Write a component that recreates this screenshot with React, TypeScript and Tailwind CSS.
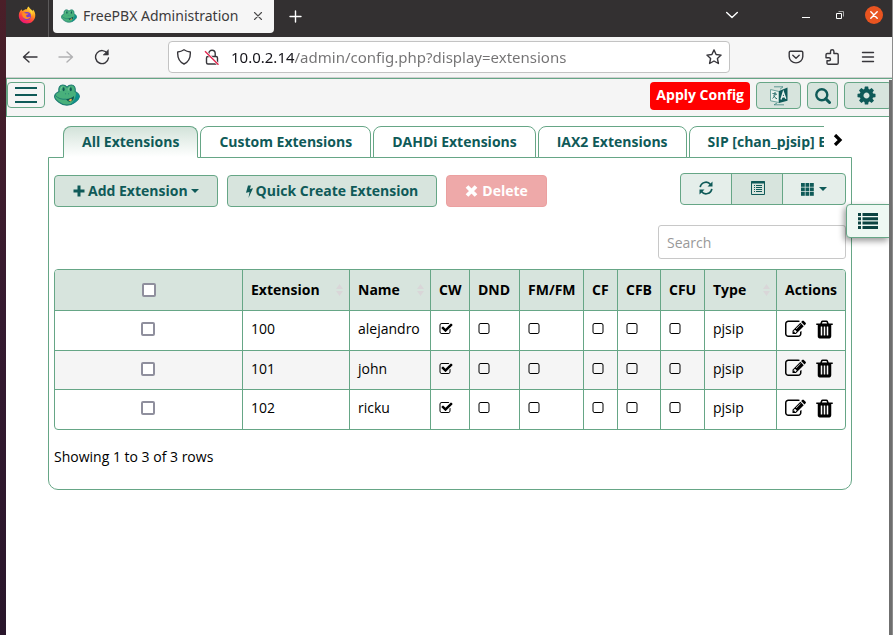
import type { ReactNode } from "react";

const CHECKED =
  "M1472 930v318q0 119-84.5 203.5t-203.5 84.5h-832q-119 0-203.5-84.5t-84.5-203.5v-832q0-119 84.5-203.5t203.5-84.5h832q63 0 117 25 15 7 18 23 3 17-9 29l-49 49q-10 10-23 10-3 0-9-2-23-6-45-6h-832q-66 0-113 47t-47 113v832q0 66 47 113t113 47h832q66 0 113-47t47-113v-254q0-13 9-22l64-64q10-10 23-10 6 0 12 3 20 8 20 29zm231-489l-814 814q-24 24-57 24t-57-24l-430-430q-24-24-24-57t24-57l110-110q24-24 57-24t57 24l263 263 647-647q24-24 57-24t57 24l110 110q24 24 24 57t-24 57z";
const UNCHECKED =
  "M1184 256h-832q-66 0-113 47t-47 113v832q0 66 47 113t113 47h832q66 0 113-47t47-113v-832q0-66-47-113t-113-47zm288 160v832q0 119-84.5 203.5t-203.5 84.5h-832q-119 0-203.5-84.5t-84.5-203.5v-832q0-119 84.5-203.5t203.5-84.5h832q119 0 203.5 84.5t84.5 203.5z";
const EDIT =
  "M888 1184l116-116-152-152-116 116v56h96v96h56zm440-720q-16-16-33 1l-350 350q-17 17-1 33t33-1l350-350q17-17 1-33zm80 594v190q0 119-84.5 203.5t-203.5 84.5h-832q-119 0-203.5-84.5t-84.5-203.5v-832q0-119 84.5-203.5t203.5-84.5h832q63 0 117 25 15 7 18 23 3 17-9 29l-49 49q-14 14-32 8-23-6-45-6h-832q-66 0-113 47t-47 113v832q0 66 47 113t113 47h832q66 0 113-47t47-113v-126q0-13 9-22l64-64q15-15 35-7t20 29zm-96-738l288 288-672 672h-288v-288zm444 132l-92 92-288-288 92-92q28-28 68-28t68 28l152 152q28 28 28 68t-28 68z";
const TRASH =
  "M704 1376v-704q0-14-9-23t-23-9h-64q-14 0-23 9t-9 23v704q0 14 9 23t23 9h64q14 0 23-9t9-23zm256 0v-704q0-14-9-23t-23-9h-64q-14 0-23 9t-9 23v704q0 14 9 23t23 9h64q14 0 23-9t9-23zm256 0v-704q0-14-9-23t-23-9h-64q-14 0-23 9t-9 23v704q0 14 9 23t23 9h64q14 0 23-9t9-23zm-544-992h448l-48-117q-7-9-17-11h-317q-10 2-17 11zm928 32v64q0 14-9 23t-23 9h-96v948q0 83-47 143.5t-113 60.5h-832q-66 0-113-58.5t-47-141.5v-952h-96q-14 0-23-9t-9-23v-64q0-14 9-23t23-9h309l70-167q15-37 54-63t79-26h320q40 0 79 26t54 63l70 167h309q14 0 23 9t9 23z";
const COG =
  "M1152 896q0-106-75-181t-181-75-181 75-75 181 75 181 181 75 181-75 75-181zm512-109v222q0 12-8 23t-20 13l-185 28q-19 54-39 91 35 50 107 138 10 12 10 25t-9 23q-27 37-99 108t-94 71q-12 0-26-9l-138-108q-44 23-91 38-16 136-29 186-7 28-36 28h-222q-14 0-24.5-8.5t-11.5-21.5l-28-184q-49-16-90-37l-141 107q-10 9-25 9-14 0-25-11-126-114-165-168-7-10-7-23 0-12 8-23 15-21 51-66.5t54-70.5q-27-50-41-99l-183-27q-13-2-21-12.5t-8-23.5v-222q0-12 8-23t19-13l186-28q14-46 39-92-40-57-107-138-10-12-10-24 0-10 9-23 26-36 98.5-107.5t94.5-71.5q13 0 26 10l138 107q44-23 91-38 16-136 29-186 7-28 36-28h222q14 0 24.5 8.5t11.5 21.5l28 184q49 16 90 37l142-107q9-9 24-9 13 0 25 10 129 119 165 170 7 8 7 22 0 12-8 23-15 21-51 66.5t-54 70.5q26 50 41 98l183 28q13 2 21 12.5t8 23.5z";

function Glyph({ d, className, label }: { d: string; className: string; label?: string }) {
  return (
    <svg viewBox="0 0 1792 1792" fill="currentColor" className={className} role={label ? "img" : undefined} aria-label={label} aria-hidden={label ? undefined : true}>
      <path d={d} />
    </svg>
  );
}

function Frog({ className }: { className: string }) {
  return (
    <svg viewBox="0 0 26 22" className={className} aria-hidden="true">
      <path d="M5 7.500C4.200 3.500 6 1 8.800 1c2 0 3.200 1 4.200 2.200C14 2 15.400 1 17.300 1c2.800 0 4.500 2.500 3.800 6.500 2.400 1.200 4.100 2.700 4.200 4.700.1 2.200-1.900 4.300-4.400 6-2.300 1.800-5 2.900-8 2.900s-5.700-1.100-8-2.900C2.500 16.500.5 14.500.6 12.400.7 10.400 2.600 8.700 5 7.500z" fill="#48b07b" stroke="#1d7a72" strokeWidth="1.100" />
      <path d="M22 8.500c1.900 1 3.200 2.300 3.300 3.900.1 2-1.900 4.100-4.400 5.800-1.500 1.200-3.200 2.100-5 2.500 3.500-2.700 6-6.700 6.100-12.200z" fill="#128f8c" />
      <path d="M1.500 11.500c2.500 3 6 4.200 10.500 3.700" fill="none" stroke="#1d7a72" strokeWidth=".9" strokeLinecap="round" />
      <path d="M12 15c3.500-.2 6-1.200 8-3 .2 3-1.300 5.200-3.600 5.600-1.800.2-3.400-.8-4.400-2.600z" fill="#0c5451" />
      <path d="M14.500 16.200l2.600-1.600 1 1.400-1.600 1.500z" fill="#f4b04c" />
      <ellipse cx="9.600" cy="5.300" rx="1" ry="2" fill="#0e5754" />
      <ellipse cx="16.800" cy="5.300" rx="1" ry="2" fill="#0e5754" />
      <path d="M6.800 7c-.2-2.200.4-3.700 1.600-4.300M14.300 6.500c0-1.700.5-3 1.500-3.600" fill="none" stroke="#8fd3ab" strokeWidth=".7" />
      <circle cx="11.600" cy="9.800" r=".5" fill="#1d7a72" />
      <circle cx="14.600" cy="9.800" r=".5" fill="#1d7a72" />
    </svg>
  );
}

function Firefox() {
  return (
    <svg viewBox="0 0 18 18" className="size-[18px]" aria-hidden="true">
      <defs>
        <linearGradient id="flame" x1="0.8" y1="0" x2="0.3" y2="1">
          <stop offset="0" stopColor="#fff044" />
          <stop offset=".4" stopColor="#ff9a1e" />
          <stop offset=".7" stopColor="#ff4040" />
          <stop offset="1" stopColor="#e9107c" />
        </linearGradient>
      </defs>
      <path d="M3.500 3.200c.3 1 .7 1.400 1.300 1.700C6 3.500 8 3 9 3.300 9 2 9.800.8 10.900.4c.2 1.800 2.300 2.700 3.600 4.300.5-.1.600-.6.500-1.200 1.800 2 2.600 4.300 2.200 7-.6 4.200-4 7-8.200 7C4.500 17.500 1 14.200.8 10 .7 7.200 1.700 4.900 3.500 3.200z" fill="url(#flame)" />
      <circle cx="8.900" cy="9.900" r="4" fill="#7a3fd0" />
      <path d="M4.200 7.200c1.300-.8 2.700-.5 3.800.2l2.600.2c-.2 1-1.400 1.200-2 1.500-.8.500-.5 1.800.8 2.100 1.200.2 2-.6 2.900-.3-.8 1.600-2.500 2.300-4.200 2.100-2.700-.4-4.300-3-3.900-5.800z" fill="#ff8a25" />
      <path d="M11 4.500c1.800 1 3 3.200 2.700 5.600 1.300-1.700 1-4.800-.8-6.300z" fill="#ffd93a" />
    </svg>
  );
}

function Stroke({ children, className = "size-4", viewBox = "0 0 16 16" }: { children: ReactNode; className?: string; viewBox?: string }) {
  return (
    <svg viewBox={viewBox} className={className} fill="none" stroke="currentColor" strokeWidth="1.4" strokeLinecap="round" strokeLinejoin="round" aria-hidden="true">
      {children}
    </svg>
  );
}

function TitleBar() {
  return (
    <div className="flex h-[37px] items-start bg-[#333031] font-['Noto_Sans','Open_Sans',sans-serif]">
      <button aria-label="Firefox View" className="flex h-[30px] w-[42px] items-center justify-center">
        <Firefox />
      </button>
      <div className="mr-1 h-full w-px bg-[#5c5a5b]" />
      <div className="flex h-[33px] w-[221px] items-center rounded-b-[4px] bg-[#f6f6f6] pr-[11px] pb-[2px] pl-2">
        <Frog className="mr-1.5 h-[14px] w-4" />
        <span className="grow text-sm whitespace-nowrap text-[#3d3b3c]">FreePBX Administration</span>
        <button aria-label="Close tab" className="text-[#4b4a4b]">
          <Stroke className="size-[10px]" viewBox="0 0 10 10"><path d="M1.500 1.500l7 7M8.500 1.500l-7 7" strokeWidth="1.100" /></Stroke>
        </button>
      </div>
      <button aria-label="New tab" className="ml-[15px] flex h-8 items-center text-white">
        <Stroke className="size-[13px]" viewBox="0 0 13 13"><path d="M6.500 1v11M1 6.500h11" /></Stroke>
      </button>
      <div className="ml-auto flex h-[30px] items-center pr-[9px] text-white">
        <button aria-label="List all tabs" className="mr-16">
          <Stroke className="h-2 w-3" viewBox="0 0 12 8"><path d="M.7 1.500L6 6.500l5.300-5" /></Stroke>
        </button>
        <button aria-label="Minimize" className="mr-[26px] flex h-5 w-2 items-center">
          <span className="mt-[5px] h-px w-full bg-white" />
        </button>
        <button aria-label="Restore" className="mr-[21px]">
          <svg viewBox="0 0 8 8" className="size-2" fill="none" stroke="#fff" aria-hidden="true">
            <path d="M.5 2.500h5v5h-5z" /><path d="M2.500.5h5v5" stroke="#aaa" />
          </svg>
        </button>
        <button aria-label="Close window" className="flex size-[18px] items-center justify-center rounded-full bg-[#e95420]">
          <Stroke className="size-[8px]" viewBox="0 0 8 8"><path d="M.8.8l6.400 6.400M7.200.8L.8 7.200" /></Stroke>
        </button>
      </div>
    </div>
  );
}

function AddressBar() {
  return (
    <div className="flex h-[41px] items-center border-b border-[#cfcfcf] bg-[#f6f6f6] px-4 text-[#37363b]">
      <button aria-label="Back" className="mr-5">
        <Stroke><path d="M15 8H1.500M7 3L1.500 8 7 13" /></Stroke>
      </button>
      <button aria-label="Forward" className="mr-5 text-[#b1b1b3]">
        <Stroke><path d="M1 8h13.500M9 3l5.500 5L9 13" /></Stroke>
      </button>
      <button aria-label="Reload" className="mr-[58px]">
        <Stroke><path d="M13.500 4.500A6.500 6.500 0 1 0 14.500 9" /><path d="M14.300 1v5H9.500z" fill="currentColor" strokeWidth=".6" /></Stroke>
      </button>
      <div className="flex h-8 min-w-0 grow items-center rounded-[4px] border border-[#c3c3c3] bg-white px-[7px]">
        <Stroke className="mr-3 size-4 shrink-0"><path d="M8 .8c2 1.400 4 2 6.300 2.200.3 5.200-1.500 9.800-6.300 12C3.200 12.800 1.400 8.200 1.700 3 4 2.800 6 2.200 8 .8z" /></Stroke>
        <svg viewBox="0 0 16 16" className="mr-[11px] size-4 shrink-0" fill="none" stroke="#37363b" strokeWidth="1.400" aria-hidden="true">
          <rect x="2.500" y="7.500" width="11" height="7.500" rx="1.500" />
          <path d="M4.800 7V4.500a3.200 3.200 0 0 1 6.400 0V7" />
          <path d="M1 2.200L14 15.200" stroke="#fff" strokeWidth="2.500" />
          <path d="M1 2.200L14.500 15.700" stroke="#e22850" strokeWidth="1.500" />
        </svg>
        <input
          aria-label="Address"
          defaultValue="10.0.2.14/admin/config.php?display=extensions"
          className="min-w-0 grow bg-[linear-gradient(to_right,#15141a_63px,#737273_63px)] bg-clip-text font-['Noto_Sans','Open_Sans',sans-serif] text-[15px] text-transparent outline-none"
        />
        <button aria-label="Bookmark this page">
          <Stroke><path d="M8 .9l2.100 4.600 5 .6-3.700 3.400 1 5L8 12l-4.400 2.500 1-5L.9 6.100l5-.6z" /></Stroke>
        </button>
      </div>
      <div className="ml-[58px] flex items-center gap-5">
        <button aria-label="Save to Pocket">
          <Stroke><path d="M2.500 2.300h11c.8 0 1.300.5 1.300 1.300v4a6.800 6.300 0 0 1-13.600 0v-4c0-.8.5-1.300 1.300-1.300z" /><path d="M4.800 6.300L8 9.300l3.200-3" /></Stroke>
        </button>
        <button aria-label="Extensions">
          <Stroke><path d="M6.500 4.500V2.500a1.700 1.700 0 0 1 3.400 0v2h3c.8 0 1.300.4 1.300 1.200V14c0 .8-.5 1.200-1.300 1.200H4.300c-.8 0-1.300-.4-1.300-1.200v-2.200h2a1.500 1.500 0 0 0 0-3H2V5.700c0-.8.5-1.200 1.300-1.200z" /></Stroke>
        </button>
        <button aria-label="Open application menu">
          <Stroke><path d="M2.500 3.500h11M2.500 8h11M2.500 12.500h11" /></Stroke>
        </button>
      </div>
    </div>
  );
}

const headerButton = "flex h-[27px] items-center justify-center rounded-[4px] border border-[#66a686] bg-[#d7e4dd]";

function AppHeader() {
  return (
    <header className="flex h-[39px] items-start border border-r-0 border-[#66a686] bg-[#f5f5f5] pt-[3px] text-[#0f5a58]">
      <button aria-label="Menu" className="flex h-[26px] w-[38px] flex-col items-center justify-center gap-[5px] rounded-[4px] border border-[#66a686]">
        <span className="h-0.5 w-[22px] bg-current" />
        <span className="h-0.5 w-[22px] bg-current" />
        <span className="h-0.5 w-[22px] bg-current" />
      </button>
      <a href="#home" aria-label="FreePBX home" className="mt-[2px] ml-[9px]">
        <Frog className="h-[22px] w-[26px]" />
      </a>
      <div className="ml-auto flex gap-[6px]">
        <button className="h-7 rounded-[4px] bg-[#f00] px-[6px] pb-[3px] text-sm font-bold whitespace-nowrap text-white">Apply Config</button>
        <button aria-label="Language" className={`${headerButton} w-[45px]`}>
          <svg viewBox="0 0 18 20" className="h-5 w-[18px]" aria-hidden="true">
            <path d="M.5 3.500L9 5.500v11L.5 14.800z" fill="#e8f2ed" stroke="#6fa39d" />
            <path d="M9 5l8.500-3.500v13.300L9 17z" fill="#0f5a58" />
            <path d="M4 .8h9l-3 2.500M14 18.800H4l3-1.800" fill="none" stroke="#3f8580" strokeWidth=".8" />
            <path d="M2.500 7.500l4.500.8M5 6v2c0 2-1 3.500-2.500 4.300M3.500 9.500c.8 1.500 2 2.800 3.500 3.300" fill="none" stroke="#0f5a58" strokeWidth=".9" />
            <path d="M11 13.500L13.300 6l2.500 6.800M12 11l3-.5" fill="none" stroke="#e8f2ed" strokeWidth="1.400" />
          </svg>
        </button>
        <button aria-label="Search" className={`${headerButton} w-[31px]`}>
          <svg viewBox="0 0 16 16" className="size-4" fill="none" stroke="currentColor" strokeWidth="2.400" aria-hidden="true">
            <circle cx="6.800" cy="6.800" r="5.500" /><path d="M10.900 10.900l3.600 3.600" strokeWidth="3" strokeLinecap="round" />
          </svg>
        </button>
        <button aria-label="Settings" className={`${headerButton} w-12 pr-[3px]`}>
          <Glyph d={COG} className="size-[21px]" />
        </button>
      </div>
    </header>
  );
}

const tabs = ["All Extensions", "Custom Extensions", "DAHDi Extensions", "IAX2 Extensions", "SIP [chan_pjsip] Extensions"];

function Tabs() {
  return (
    <div className="flex items-start">
      <div className="h-[31px] w-[15px] shrink-0" />
      <div role="tablist" className="z-10 -mb-px flex h-8 min-w-0 grow gap-0.5 overflow-hidden">
        {tabs.map((tab, i) => (
          <button
            key={tab}
            role="tab"
            aria-selected={i === 0}
            className={`shrink-0 rounded-t-[8px] border px-[18px] text-sm font-bold whitespace-nowrap text-[#0f5a58] ${
              i === 0 ? "border-[#66a686] border-b-white bg-linear-to-b from-[#d3e3da] to-white" : "border-[#66a686] bg-white"
            }`}
          >
            {tab}
          </button>
        ))}
      </div>
      <button aria-label="Next tabs" className="flex h-[27px] w-7 shrink-0 items-center justify-center">
        <svg viewBox="0 0 10 12" className="h-3 w-[10px]" aria-hidden="true">
          <path d="M2 1l5 5-5 5" fill="none" stroke="#000" strokeWidth="3.200" />
        </svg>
      </button>
    </div>
  );
}

const actionButton = "flex h-8 items-center justify-center rounded-[4px] border text-sm font-bold whitespace-nowrap";

function Caret() {
  return (
    <svg viewBox="0 0 8 4" className="h-1 w-2" fill="currentColor" aria-hidden="true"><path d="M0 0h8L4 4z" /></svg>
  );
}

function Toolbar() {
  return (
    <div className="flex items-start text-[#0f5a58]">
      <div className="flex gap-[9px] pt-[2px]">
        <button className={`${actionButton} gap-[3px] border-[#66a686] bg-[#d7e4dd] px-[18px]`}>
          <svg viewBox="0 0 12 12" className="size-3" fill="currentColor" aria-hidden="true"><path d="M4.500.5h3v4h4v3h-4v4h-3v-4h-4v-3h4z" /></svg>
          Add Extension
          <Caret />
        </button>
        <button className={`${actionButton} gap-[3px] border-[#66a686] bg-[#d7e4dd] px-[18px]`}>
          <svg viewBox="0 0 7 13" className="h-[13px] w-[7px]" fill="currentColor" aria-hidden="true"><path d="M2 .5h3L3.800 4 7 3.300 2.500 13l1-6L0 7.800z" /></svg>
          Quick Create Extension
        </button>
        <button disabled className={`${actionButton} gap-1 border-[#eba0a0] bg-[#eea9a9] px-[18px] text-white`}>
          <svg viewBox="0 0 13 12" className="h-3 w-[13px]" aria-hidden="true"><path d="M2 1.500l9 9M11 1.500l-9 9" stroke="currentColor" strokeWidth="3.800" /></svg>
          Delete
        </button>
      </div>
      <div className="ml-auto flex h-8 rounded-[4px] border border-[#66a686] bg-[#e5eeea]">
        <button aria-label="Refresh" className="flex w-[50px] items-center justify-center pb-[2px]">
          <svg viewBox="0 0 14 14" className="size-[14px]" fill="none" stroke="currentColor" strokeWidth="1.700" aria-hidden="true">
            <path d="M1.200 6.200A5.800 5.800 0 0 1 11.500 3.500M12.800 7.800A5.800 5.800 0 0 1 2.500 10.500" />
            <path d="M13.500.5v5h-5zM.5 13.500v-5h5z" fill="currentColor" stroke="none" />
          </svg>
        </button>
        <button aria-label="Toggle view" className="flex w-[52px] items-center justify-center border-x border-[#66a686] bg-[#d7e4dd] pb-[2px] pl-px">
          <svg viewBox="0 0 14 14" className="size-[14px]" fill="none" stroke="currentColor" aria-hidden="true">
            <path d="M.5 .5h13v13H.5z" /><path d="M0 1.500h14" strokeWidth="2" />
            <path d="M3 4.500h1M3 6.500h1M3 8.500h1M3 10.500h1M5 4.500h6M5 6.500h6M5 8.500h6M5 10.500h6" />
          </svg>
        </button>
        <button aria-label="Columns" className="flex w-[62px] items-center justify-center gap-[5px]">
          <svg viewBox="0 0 13 13" className="size-[13px]" fill="currentColor" aria-hidden="true">
            {[0, 4.5, 9].map((y) => [0, 4.5, 9].map((x) => <rect key={`${x}-${y}`} x={x} y={y} width="3.800" height="3.800" />))}
          </svg>
          <Caret />
        </button>
      </div>
    </div>
  );
}

const columns = [
  { name: "Extension", sortable: true },
  { name: "Name", sortable: true },
  { name: "CW" },
  { name: "DND" },
  { name: "FM/FM" },
  { name: "CF" },
  { name: "CFB" },
  { name: "CFU" },
  { name: "Type", sortable: true },
  { name: "Actions" },
];

const rows = [
  { extension: "100", name: "alejandro", type: "pjsip" },
  { extension: "101", name: "john", type: "pjsip" },
  { extension: "102", name: "ricku", type: "pjsip" },
];

const box = "block size-[14px] appearance-none rounded-[2px] border-2 border-[#8f8f9d] bg-white";
const cell = "border-t border-l border-[#66a686] p-0 pb-[3px] pl-2 text-left";

function ExtensionTable() {
  return (
    <div className="overflow-hidden rounded-[4px] border border-[#66a686]">
      <table className="w-full table-fixed border-separate border-spacing-0 text-sm">
        <colgroup>
          <col />
          <col className="w-[107px]" />
          <col className="w-[81px]" />
          <col className="w-[39px]" />
          <col className="w-[50px]" />
          <col className="w-[64px]" />
          <col className="w-[34px]" />
          <col className="w-[43px]" />
          <col className="w-[44px]" />
          <col className="w-[72px]" />
          <col className="w-[69px]" />
        </colgroup>
        <thead className="bg-[#d7e4dd]">
          <tr className="h-10">
            <th className="p-0">
              <input type="checkbox" aria-label="Select all rows" className={`${box} mx-auto`} />
            </th>
            {columns.map((column) => (
              <th key={column.name} className="border-l border-[#66a686] p-0 pl-2 text-left font-bold">
                <div className="flex items-center justify-between pr-[6px]">
                  {column.name}
                  {column.sortable && (
                    <svg viewBox="0 0 7 12" className="h-3 w-[7px]" fill="#d9d6d8" aria-hidden="true"><path d="M0 5l3.500-5L7 5zM0 7l3.500 5L7 7z" /></svg>
                  )}
                </div>
              </th>
            ))}
          </tr>
        </thead>
        <tbody>
          {rows.map((row) => (
            <tr key={row.extension} className="h-10 even:h-[39px] even:bg-[#f5f5f5]">
              <td className="border-t border-[#66a686] p-0 pr-[2px] pb-[3px]">
                <input type="checkbox" aria-label={`Select ${row.extension}`} className={`${box} mx-auto`} />
              </td>
              <td className={cell}>{row.extension}</td>
              <td className={cell}>{row.name}</td>
              <td className={cell}><Glyph d={CHECKED} label="Enabled" className="size-[14px]" /></td>
              {["DND", "FM/FM", "CF", "CFB", "CFU"].map((feature) => (
                <td key={feature} className={cell}><Glyph d={UNCHECKED} label={`${feature} disabled`} className="size-[14px]" /></td>
              ))}
              <td className={cell}>{row.type}</td>
              <td className={cell}>
                <div className="flex items-center gap-2">
                  <a href={`#edit-${row.extension}`} aria-label={`Edit ${row.extension}`}><Glyph d={EDIT} className="size-[21px]" /></a>
                  <button aria-label={`Delete ${row.extension}`}><Glyph d={TRASH} className="size-[21px]" /></button>
                </div>
              </td>
            </tr>
          ))}
        </tbody>
      </table>
    </div>
  );
}

export default function App() {
  return (
    <div className="flex min-h-screen bg-white font-['Open_Sans','Noto_Sans',sans-serif] text-black">
      <div className="w-[6px] shrink-0 bg-linear-to-b from-[#4b1f28] via-[#351a30] to-[#29162b]" />
      <div className="relative flex min-w-0 grow flex-col border-r border-[#8c8c8c]">
        <TitleBar />
        <AddressBar />
        <AppHeader />
        <main className="pt-[9px] pr-10 pl-[42px]">
          <Tabs />
          <section className="rounded-b-[10px] border border-[#66a686] px-[5px] pt-[15px] pb-[22px]">
            <Toolbar />
            <div className="mt-[18px] mb-[10px] flex justify-end">
              <input type="search" aria-label="Search" placeholder="Search" className="h-[34px] w-[188px] rounded-[3px] border border-[#c8c8c8] px-2 text-sm outline-none placeholder:text-[#999]" />
            </div>
            <ExtensionTable />
            <p className="mt-[17px] text-sm">Showing 1 to 3 of 3 rows</p>
          </section>
        </main>
        <button aria-label="Toggle side menu" className="absolute top-[204px] right-[2px] flex h-[34px] w-11 items-center rounded-l-[4px] border border-[#66a686] bg-[#eef8f3] pl-[11px] text-[#0b4341] shadow-[-2px_3px_6px_rgba(0,0,0,0.4)]">
          <svg viewBox="0 0 20 16" className="h-4 w-5" fill="currentColor" aria-hidden="true">
            <path d="M0 0h3v3H0zM0 4.300h3v3H0zM0 8.600h3v3H0zM0 13h3v3H0zM4.500 0H20v3H4.500zM4.500 4.300H20v3H4.500zM4.500 8.600H20v3H4.500zM4.500 13H20v3H4.500z" />
          </svg>
        </button>
        <div className="absolute top-20 right-0 bottom-0 w-[3px] bg-[#6f6f6f]" />
      </div>
    </div>
  );
}
